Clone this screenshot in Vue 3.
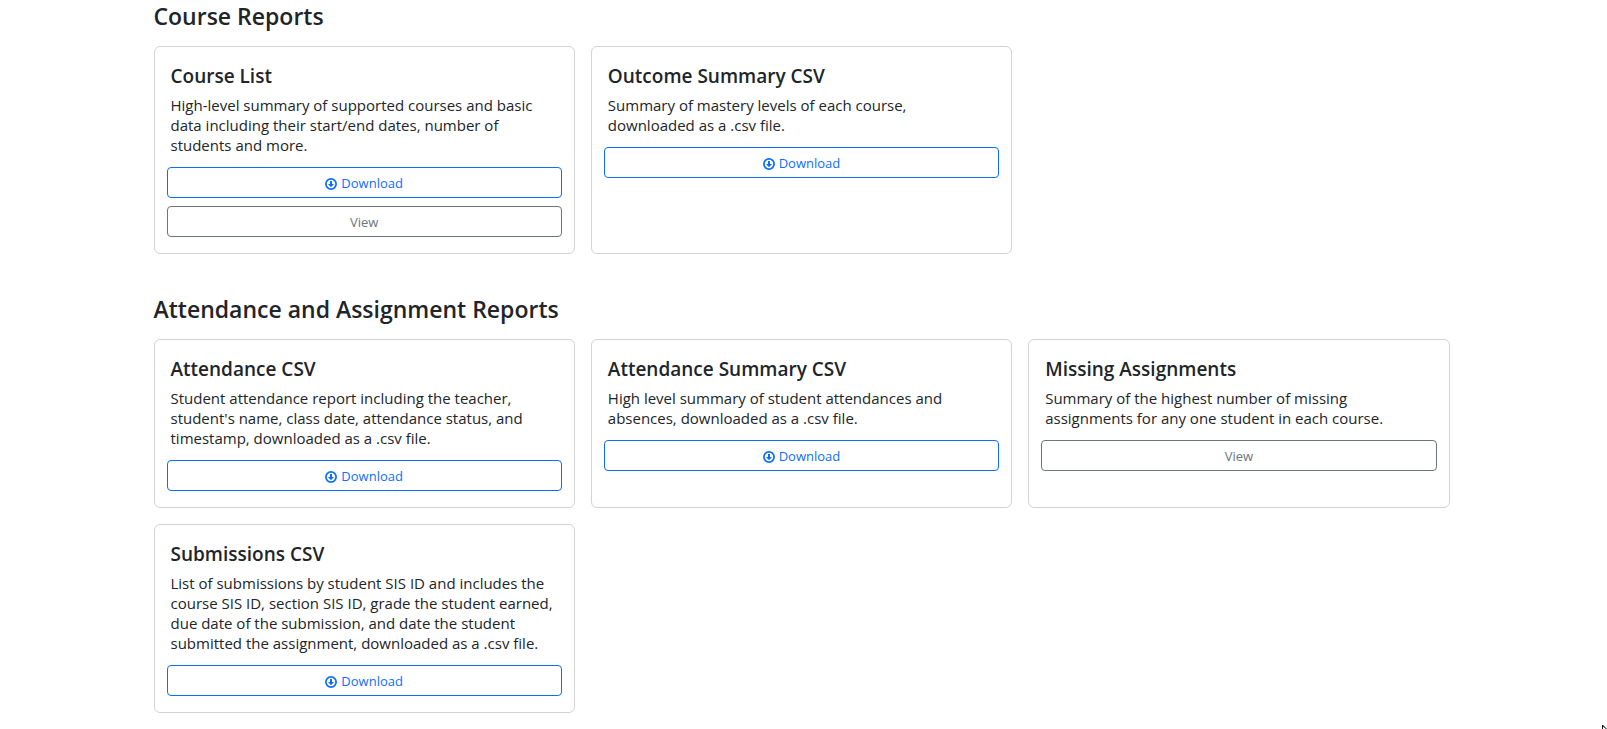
<script setup>
const sections = [
  {
    title: 'Course Reports',
    cards: [
      {
        title: 'Course List',
        lines: ['High-level summary of supported courses and basic', 'data including their start/end dates, number of', 'students and more.'],
        actions: ['Download', 'View'],
      },
      {
        title: 'Outcome Summary CSV',
        lines: ['Summary of mastery levels of each course,', 'downloaded as a .csv file.'],
        actions: ['Download'],
      },
    ],
  },
  {
    title: 'Attendance and Assignment Reports',
    cards: [
      {
        title: 'Attendance CSV',
        lines: ['Student attendance report including the teacher,', "student's name, class date, attendance status, and", 'timestamp, downloaded as a .csv file.'],
        actions: ['Download'],
      },
      {
        title: 'Attendance Summary CSV',
        lines: ['High level summary of student attendances and', 'absences, downloaded as a .csv file.'],
        actions: ['Download'],
      },
      {
        title: 'Missing Assignments',
        lines: ['Summary of the highest number of missing', 'assignments for any one student in each course.'],
        actions: ['View'],
      },
      {
        title: 'Submissions CSV',
        lines: ['List of submissions by student SIS ID and includes the', 'course SIS ID, section SIS ID, grade the student earned,', 'due date of the submission, and date the student', 'submitted the assignment, downloaded as a .csv file.'],
        actions: ['Download'],
      },
    ],
  },
]
</script>

<template>
  <main class="page">
    <section v-for="section in sections" :key="section.title" class="section">
      <h2 class="section-title">{{ section.title }}</h2>
      <div class="grid">
        <article v-for="card in section.cards" :key="card.title" class="card">
          <h3 class="card-title">{{ card.title }}</h3>
          <p class="card-text">
            <template v-for="(line, i) in card.lines" :key="i"><br v-if="i" />{{ line }}</template>
          </p>
          <div class="actions">
            <button v-for="action in card.actions" :key="action" type="button" class="btn" :class="action === 'View' ? 'btn-secondary' : 'btn-primary'">
              <svg v-if="action === 'Download'" class="icon" viewBox="0 0 24 24" aria-hidden="true">
                <circle cx="12" cy="12" r="10.2" fill="none" stroke="currentColor" stroke-width="3.5" />
                <path d="M10.4 6h3.2q.4 0 .4.5V12h3q.5 0 .5.5 0 .2-.2.4l-5 5q-.3.3-.6 0l-5-5q-.2-.2-.2-.4 0-.5.5-.5h3V6.500q0-.5.4-.5z" fill="currentColor" />
              </svg>
              <span>{{ action }}</span>
            </button>
          </div>
        </article>
      </div>
    </section>
    <svg class="pointer" viewBox="0 0 5 4" aria-hidden="true">
      <path d="M0 0h1l4 4H4L1 1.500V4H0z" fill="#111" />
    </svg>
  </main>
</template>

<style>
body {
  margin: 0;
  background: #fff;
}
</style>

<style scoped>
.page {
  box-sizing: border-box;
  max-width: 1320px;
  margin: 0 auto;
  padding: 2px 14px 0 10px;
  color: #212529;
  font-family: "Segoe UI", "Open Sans", "Noto Sans", sans-serif;
}
.section {
  margin-bottom: 41px;
}
.section:last-of-type {
  margin-bottom: 0;
}
.section-title {
  margin: 0;
  padding-bottom: 15px;
  font-size: 23px;
  line-height: 29px;
  font-weight: 600;
}
.grid {
  display: grid;
  grid-template-columns: repeat(3, minmax(0, 1fr));
  gap: 16px;
}
.card {
  padding: 16px 12px;
  border: 1px solid #d3d3d4;
  border-radius: 6px;
}
.card-title {
  margin: 0 4px 6px;
  font-size: 19px;
  line-height: 26px;
  font-weight: 600;
}
.card-text {
  margin: 0 4px 12px;
  font-size: 15px;
  line-height: 20px;
  white-space: nowrap;
}
.actions {
  display: grid;
  gap: 8px;
}
.btn {
  display: flex;
  align-items: center;
  justify-content: center;
  gap: 4px;
  width: 100%;
  padding: 5px 8px 3px;
  border: 1px solid;
  border-radius: 4px;
  background: #fff;
  font-family: inherit;
  font-size: 13px;
  line-height: 21px;
  cursor: pointer;
}
.btn-primary {
  border-color: #0d6efd;
  color: #0d6efd;
}
.btn-secondary {
  border-color: #6c757d;
  color: #6c757d;
}
.icon {
  width: 12px;
  height: 12px;
}
.pointer {
  position: fixed;
  right: 0;
  bottom: 0;
  width: 5px;
  height: 4px;
}
</style>
